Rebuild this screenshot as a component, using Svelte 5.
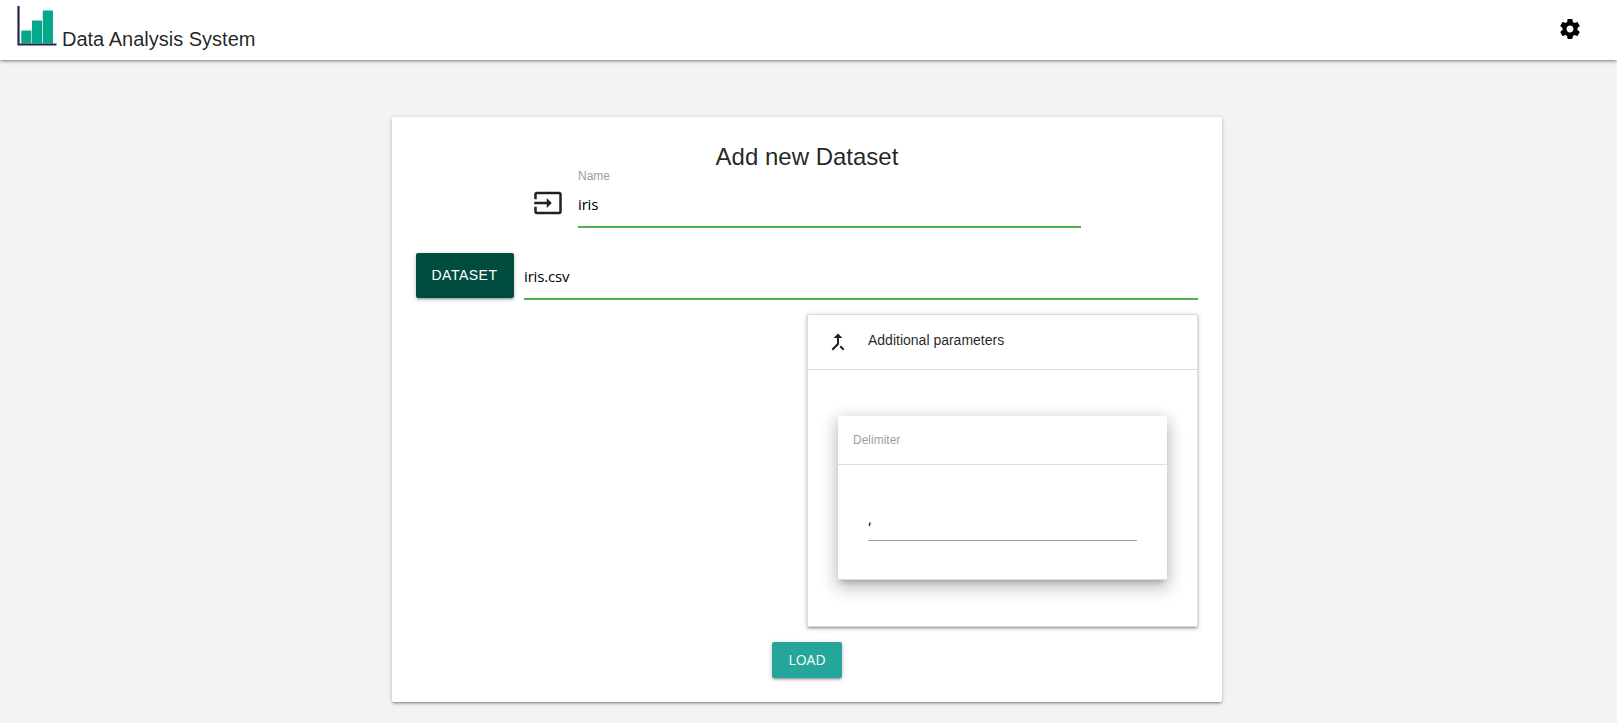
<script>
  let name = $state('iris');
  let file = $state('iris.csv');
  let delimiter = $state(',');
</script>

<header class="nav">
  <div class="brand">
    <svg class="logo" width="40" height="40" viewBox="0 0 40 40">
      <path fill="#05a88a" d="M4.300 25.300q0-.8.8-.8h8.500q.8 0 .8.8V37.500H4.300zM15 15.300q0-.8.8-.8h8.500q.8 0 .8.8V37.500H15zM25.800 5.300q0-.8.8-.8h8.600q.8 0 .8.8V37.500H25.800z" />
      <path fill="none" stroke="#24264a" stroke-width="2.200" d="M1.500 0v38.500H39.500" />
    </svg>
    <span>Data Analysis System</span>
  </div>
  <svg class="gear" width="24" height="24" viewBox="0 0 24 24">
    <path d="M19.430 12.980c.04-.32.07-.64.07-.98s-.03-.66-.07-.98l2.110-1.650c.19-.15.24-.42.12-.64l-2-3.460c-.12-.22-.39-.3-.61-.22l-2.490 1c-.52-.4-1.080-.73-1.690-.98l-.38-2.650C14.460 2.180 14.250 2 14 2h-4c-.25 0-.46.18-.49.42l-.38 2.650c-.61.25-1.170.59-1.690.98l-2.490-1c-.23-.09-.49 0-.61.22l-2 3.460c-.13.22-.07.49.12.64l2.110 1.650c-.04.32-.07.65-.07.98s.03.66.07.98l-2.110 1.650c-.19.15-.24.42-.12.64l2 3.460c.12.22.39.3.61.22l2.490-1c.52.4 1.080.73 1.690.98l.38 2.650c.03.24.24.42.49.42h4c.25 0 .46-.18.49-.42l.38-2.650c.61-.25 1.170-.59 1.690-.98l2.490 1c.23.09.49 0 .61-.22l2-3.460c.12-.22.07-.49-.12-.64l-2.110-1.650zM12 15.500c-1.930 0-3.500-1.570-3.500-3.500s1.570-3.500 3.500-3.500 3.500 1.570 3.500 3.500-1.570 3.500-3.500 3.500z" />
  </svg>
</header>

<main class="card">
  <h1>Add new Dataset</h1>
  <div class="name-row">
    <svg width="30" height="30" viewBox="0 0 24 24">
      <path d="M21 3.010H3c-1.100 0-2 .9-2 2V9h2V4.990h18v14.030H3V15H1v4.010c0 1.100.9 1.980 2 1.980h18c1.100 0 2-.88 2-1.980v-14c0-1.110-.9-2-2-2zM11 16l4-4-4-4v3H1v2h10v3z" />
    </svg>
    <label class="field">
      <span class="label">Name</span>
      <input class="valid" bind:value={name} />
    </label>
  </div>

  <div class="file-row">
    <button class="btn dark">DATASET</button>
    <input class="valid" bind:value={file} aria-label="Dataset" />
  </div>

  <section class="panel">
    <div class="panel-head">
      <svg width="24" height="24" viewBox="0 0 24 24">
        <path d="M17 20.410L18.410 19 15 15.590 13.590 17 17 20.410zM7.500 8H11v5.590L5.590 19 7 20.410l6-6V8h3.500L12 3.500 7.500 8z" />
      </svg>
      <span>Additional parameters</span>
    </div>
    <div class="inner">
      <div class="inner-head">Delimiter</div>
      <div class="inner-body"><input bind:value={delimiter} aria-label="Delimiter" /></div>
    </div>
  </section>

  <button class="btn load">LOAD</button>
</main>

<style>
  :global(body) {
    background: #f3f3f3;
    font-family: 'Liberation Sans', Arial, sans-serif;
    color: rgba(0, 0, 0, 0.87);
  }
  :global(*) { box-sizing: border-box; }
  :global(#app) { display: flow-root; min-height: 100vh; }
  svg { display: block; flex: none; fill: currentColor; }
  .nav, .card, .panel, .btn {
    box-shadow: 0 2px 2px 0 rgba(0, 0, 0, 0.14), 0 3px 1px -2px rgba(0, 0, 0, 0.12), 0 1px 5px 0 rgba(0, 0, 0, 0.2);
  }
  .nav {
    height: 60px;
    background: #fff;
    display: flex;
    justify-content: space-between;
    padding: 6px 35px 0 17px;
  }
  .brand { display: flex; gap: 5px; font-size: 20px; line-height: 24px; }
  .brand span { padding-top: 21px; }
  .gear { margin-top: 11px; color: #000; }
  .card {
    width: 830px;
    height: 585px;
    margin: 57px 0 0 392px;
    padding: 24px;
    background: #fff;
    border-radius: 2px;
    display: flex;
    flex-direction: column;
  }
  h1 {
    margin: 0;
    font-size: 24px;
    font-weight: 400;
    line-height: 32px;
    text-align: center;
  }
  .name-row { display: flex; gap: 15px; padding-left: 117px; height: 55px; }
  .name-row svg { margin-top: 15px; }
  .field { width: 503px; display: flex; flex-direction: column; }
  .label { font-size: 12px; line-height: 14px; margin-top: -4px; height: 14px; color: #9e9e9e; }
  input {
    display: block;
    width: 100%;
    height: 45px;
    margin: 0;
    padding: 0;
    border: 0;
    border-bottom: 1px solid #9e9e9e;
    border-radius: 0;
    outline: 0;
    background: transparent;
    color: #000;
    font: 15px 'Open Sans', 'Noto Sans', sans-serif;
    letter-spacing: -0.15px;
  }
  input.valid { border-bottom: 2px solid #4caf50; height: 47px; }
  .field input.valid { height: 45px; padding-bottom: 2px; }
  .file-row { display: flex; gap: 10px; margin-top: 25px; height: 47px; }
  .btn {
    border: 0;
    border-radius: 2px;
    padding: 0 1px 2px 0;
    color: #fff;
    font-size: 14px;
    letter-spacing: 0.5px;
    text-align: center;
  }
  .dark { flex: none; width: 98px; height: 45px; background: #004d40; font-family: 'Liberation Sans', Arial, sans-serif; }
  .panel {
    width: 391px;
    height: 313px;
    margin: 14px 0 0 391px;
    border: 1px solid #ddd;
  }
  .panel-head {
    height: 55px;
    border-bottom: 1px solid #ddd;
    display: flex;
    gap: 18px;
    padding: 16px 0 0 18px;
    font-size: 14px;
    line-height: 18px;
  }
  .panel-head svg { margin-top: -1px; }
  .inner {
    width: 329px;
    height: 164px;
    margin: 46px 0 0 30px;
    background: #fff;
    border-bottom: 1px solid #ddd;
    box-shadow: 0 8px 17px 2px rgba(0, 0, 0, 0.14), 0 3px 14px 2px rgba(0, 0, 0, 0.12), 0 5px 5px -3px rgba(0, 0, 0, 0.2);
  }
  .inner-head {
    height: 49px;
    border-bottom: 1px solid #ddd;
    padding: 17px 15px 0;
    font-size: 12px;
    line-height: 14px;
    color: #9e9e9e;
  }
  .inner-body { padding: 30px; }
  .inner-body input { height: 46px; }
  .load {
    width: 70px;
    height: 36px;
    margin: 15px auto 0;
    background: #26a69a;
    font-family: 'Open Sans', 'Noto Sans', sans-serif;
    font-size: 14px;
    letter-spacing: 0;
    padding-right: 0;
    flex: none;
  }
</style>
